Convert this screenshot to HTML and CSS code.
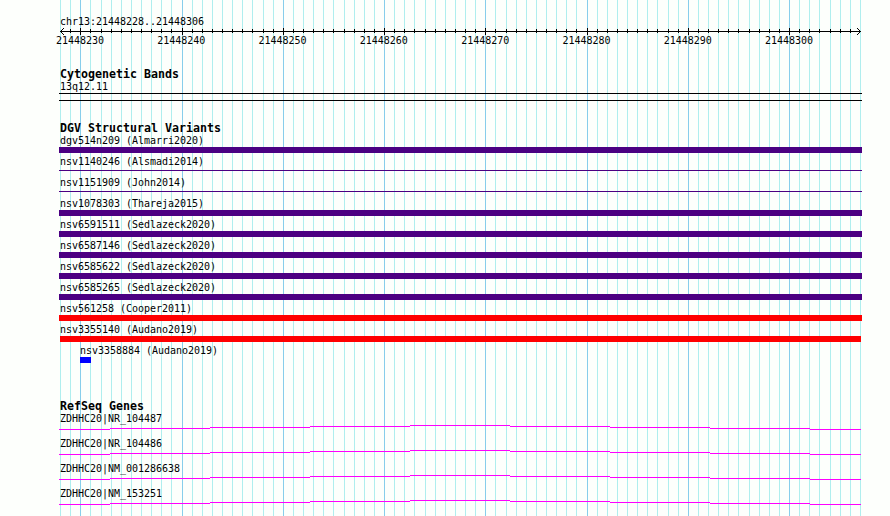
FILE: index.html
```html
<!DOCTYPE html>
<html lang="en">
<head>
    <meta charset="UTF-8">
    <meta name="viewport" content="width=device-width, initial-scale=1.0">
    <title>chr13:21448228..21448306</title>
    <link rel="stylesheet" href="styles.css">
</head>
<body>

    <div class="browser">
        <svg class="grid" width="890" height="516" shape-rendering="crispEdges">
            <path id="gridMinor" class="grid-minor" d=""/>
            <path id="gridMajor" class="grid-major" d=""/>
        </svg>

        <div class="ruler">
            <p class="label">chr13:21448228..21448306</p>
            <svg class="axis" width="803" height="9" shape-rendering="crispEdges">
                <path d="M1 4.5H802"/>
                <path id="ticks" d=""/>
                <path d="M2 3h1v1h-1zM3 2h1v1h-1zM4 1h1v1h-1zM2 5h1v1h-1zM3 6h1v1h-1zM4 7h1v1h-1z" class="arrow"/>
                <path d="M800 3h1v1h-1zM799 2h1v1h-1zM798 1h1v1h-1zM800 5h1v1h-1zM799 6h1v1h-1zM798 7h1v1h-1z" class="arrow"/>
            </svg>
            <div class="positions">
                <span>21448230</span>
                <span>21448240</span>
                <span>21448250</span>
                <span>21448260</span>
                <span>21448270</span>
                <span>21448280</span>
                <span>21448290</span>
                <span>21448300</span>
            </div>
        </div>

        <div class="track cytoband">
            <h2>Cytogenetic Bands</h2>
            <p class="label">13q12.11</p>
            <div class="band"></div>
        </div>

        <div class="track variants">
            <h2>DGV Structural Variants</h2>
            <div class="feature"><p class="label">dgv514n209 (Almarri2020)</p><div class="bar"></div></div>
            <div class="feature"><p class="label">nsv1140246 (Alsmadi2014)</p><div class="bar thin"></div></div>
            <div class="feature"><p class="label">nsv1151909 (John2014)</p><div class="bar thin"></div></div>
            <div class="feature"><p class="label">nsv1078303 (Thareja2015)</p><div class="bar"></div></div>
            <div class="feature"><p class="label">nsv6591511 (Sedlazeck2020)</p><div class="bar"></div></div>
            <div class="feature"><p class="label">nsv6587146 (Sedlazeck2020)</p><div class="bar"></div></div>
            <div class="feature"><p class="label">nsv6585622 (Sedlazeck2020)</p><div class="bar"></div></div>
            <div class="feature"><p class="label">nsv6585265 (Sedlazeck2020)</p><div class="bar"></div></div>
            <div class="feature"><p class="label">nsv561258 (Cooper2011)</p><div class="bar loss"></div></div>
            <div class="feature"><p class="label">nsv3355140 (Audano2019)</p><div class="bar loss inner"></div></div>
            <div class="feature short"><p class="label">nsv3358884 (Audano2019)</p><div class="bar gain"></div></div>
        </div>

        <div class="track genes">
            <h2>RefSeq Genes</h2>
            <div class="gene">
                <p class="label">ZDHHC20|NR_104487</p>
                <svg class="intron" width="803" height="5" shape-rendering="crispEdges"><path d="M0 4.5H51M51 3.5H151M151 2.5H251M251 1.5H351M351 .5H451M451 1.5H551M551 2.5H651M651 3.5H751M751 4.5H802"/></svg>
            </div>
            <div class="gene">
                <p class="label">ZDHHC20|NR_104486</p>
                <svg class="intron" width="803" height="5" shape-rendering="crispEdges"><path d="M0 4.5H51M51 3.5H151M151 2.5H251M251 1.5H351M351 .5H451M451 1.5H551M551 2.5H651M651 3.5H751M751 4.5H802"/></svg>
            </div>
            <div class="gene">
                <p class="label">ZDHHC20|NM_001286638</p>
                <svg class="intron" width="803" height="5" shape-rendering="crispEdges"><path d="M0 4.5H51M51 3.5H151M151 2.5H251M251 1.5H351M351 .5H451M451 1.5H551M551 2.5H651M651 3.5H751M751 4.5H802"/></svg>
            </div>
            <div class="gene">
                <p class="label">ZDHHC20|NM_153251</p>
                <svg class="intron" width="803" height="5" shape-rendering="crispEdges"><path d="M0 4.5H51M51 3.5H151M151 2.5H251M251 1.5H351M351 .5H451M451 1.5H551M551 2.5H651M651 3.5H751M751 4.5H802"/></svg>
            </div>
        </div>
    </div>

    <script>
        // 79 bases across 800px, a major line every 10 bases
        let minor = "";
        let major = "";
        let ticks = "";

        for (let i = 0; i <= 79; i++) {
            let x = Math.round(i * 800 / 79);
            let isMajor = i % 10 === 2;

            if (isMajor) {
                major += `M${x + 60.5} 0V516`;
            } else {
                minor += `M${x + 60.5} 0V516`;
            }

            if (i > 0 && i < 79) {
                ticks += isMajor ? `M${x + 1.5} 1V8` : `M${x + 1.5} 2V6`;
            }
        }

        document.getElementById("gridMinor").setAttribute("d", minor);
        document.getElementById("gridMajor").setAttribute("d", major);
        document.getElementById("ticks").setAttribute("d", ticks);
    </script>
</body>
</html>
```
FILE: styles.css
```css
* {
    box-sizing: border-box;
    margin: 0;
    padding: 0;
}

body {
    background: #fdfffc;
    color: #000;
    font-family: 'DejaVu Sans Mono', 'Liberation Mono', monospace;
    font-size: 10px;
    line-height: 13px;
    overflow: hidden;
}

svg {
    display: block;
    fill: none;
}

.browser {
    position: relative;
    width: 890px;
    height: 516px;
    padding: 15px 28px 0 59px;
    overflow: hidden;
}

/* Grid lines behind the tracks */
.grid {
    position: absolute;
    top: 0;
    left: 0;
    z-index: -1;
}

.grid-minor {
    stroke: #afeeee;
}

.grid-major {
    stroke: #87ceeb;
}

.label {
    height: 13px;
    padding-left: 1px;
    letter-spacing: -0.02px;
    white-space: nowrap;
}

h2 {
    height: 13px;
    padding-left: 1px;
    font-size: 11.6px;
    line-height: 13px;
    letter-spacing: 0.02px;
}

/* Ruler */
.ruler {
    height: 53px;
}

.axis {
    margin-top: -1px;
    stroke: #000;
}

.axis .arrow {
    fill: #000;
    stroke: none;
}

.positions {
    display: flex;
    justify-content: space-between;
    width: 757px;
    margin-left: -3px;
    margin-top: -2px;
    letter-spacing: -0.02px;
}

/* Cytogenetic bands */
.cytoband {
    height: 54px;
}

.cytoband .label {
    margin-top: -1px;
}

.band {
    height: 8px;
    border-top: 1px solid #000;
    border-bottom: 1px solid #000;
}

/* Structural variants */
.variants {
    height: 278px;
}

.variants h2 {
    margin-bottom: -1px;
}

.feature {
    height: 21px;
}

.bar {
    height: 6px;
    background: #4b0082;
}

.bar.thin {
    height: 1px;
    margin-top: 2px;
}

.bar.loss {
    background: #f00;
}

.bar.inner {
    margin: 0 1px;
}

.short {
    padding-left: 21px;
}

.short .label {
    padding-left: 0;
}

.bar.gain {
    width: 11px;
    background: #00f;
}

/* Genes */
.genes h2 {
    margin-bottom: -1px;
}

.gene {
    height: 25px;
}

.intron {
    stroke: #f0f;
}
```
